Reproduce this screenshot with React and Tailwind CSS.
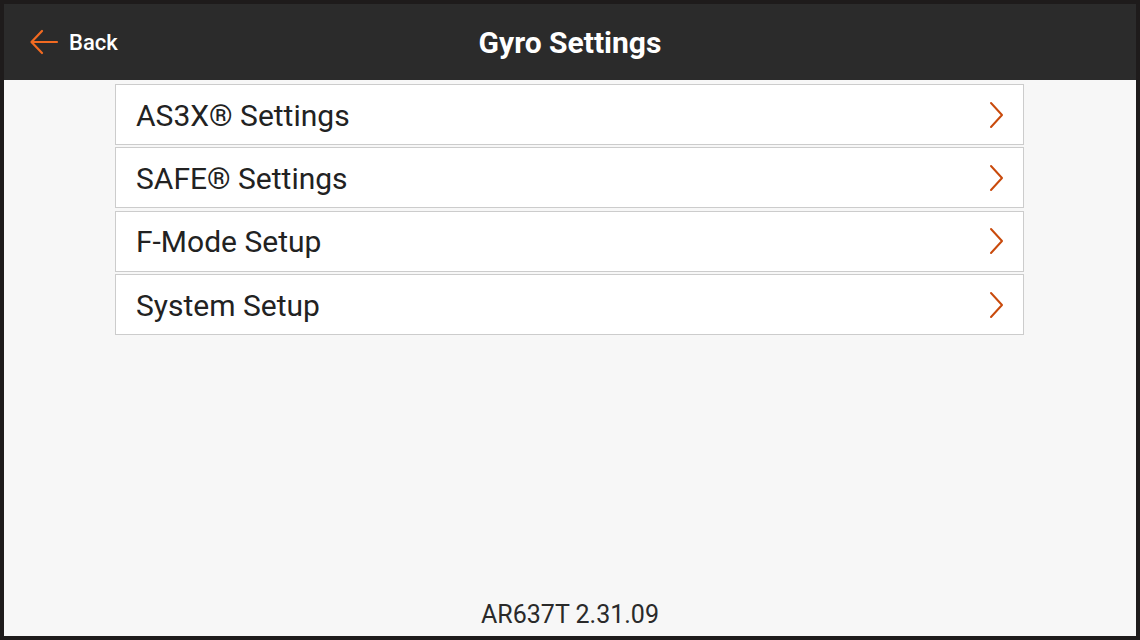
import React from "react";

const items = ["AS3X® Settings", "SAFE® Settings", "F-Mode Setup", "System Setup"];

function Chevron() {
  return (
    <svg width="16" height="28" viewBox="0 0 16 28" fill="none">
      <polyline points="2,2 13,14 2,26" stroke="#c94a0c" strokeWidth="2" strokeLinecap="round" strokeLinejoin="round" />
    </svg>
  );
}

export default function App() {
  return (
    <div className="w-[1140px] h-[640px] bg-[#1e1b1b] p-[4px] font-['Roboto',sans-serif]">
      <div className="flex flex-col h-full">
        <div className="h-[76px] bg-[#2b2b2b] relative flex items-center justify-center">
          <div className="absolute left-[25px] top-0 h-full flex items-center gap-[10px]">
            <svg width="30" height="26" viewBox="0 0 30 26" fill="none">
              <path d="M28 13H3M13 2L2.5 13L13 24" stroke="#f26a21" strokeWidth="2.2" strokeLinecap="round" strokeLinejoin="round" />
            </svg>
            <span className="text-white text-[22px] font-medium leading-none mt-[1px]">Back</span>
          </div>
          <span className="text-white text-[30px] font-bold leading-none mt-[1px]">Gyro Settings</span>
        </div>
        <div className="flex-1 bg-[#f7f7f7] flex flex-col">
          <div className="flex flex-col gap-[2.4px] pt-[4px] pl-[111px]">
            {items.map((t) => (
              <div key={t} className="w-[909px] h-[61px] bg-white border border-[#cccccc] flex items-center justify-between pl-[20px] pr-[18px]">
                <span className="text-[30px] text-[#222222] leading-none mt-[2px]">{t}</span>
                <Chevron />
              </div>
            ))}
          </div>
          <div className="flex-1" />
          <div className="text-center text-[25px] text-[#2a2a2a] leading-none pb-[9px]">AR637T 2.31.09</div>
        </div>
      </div>
    </div>
  );
}
